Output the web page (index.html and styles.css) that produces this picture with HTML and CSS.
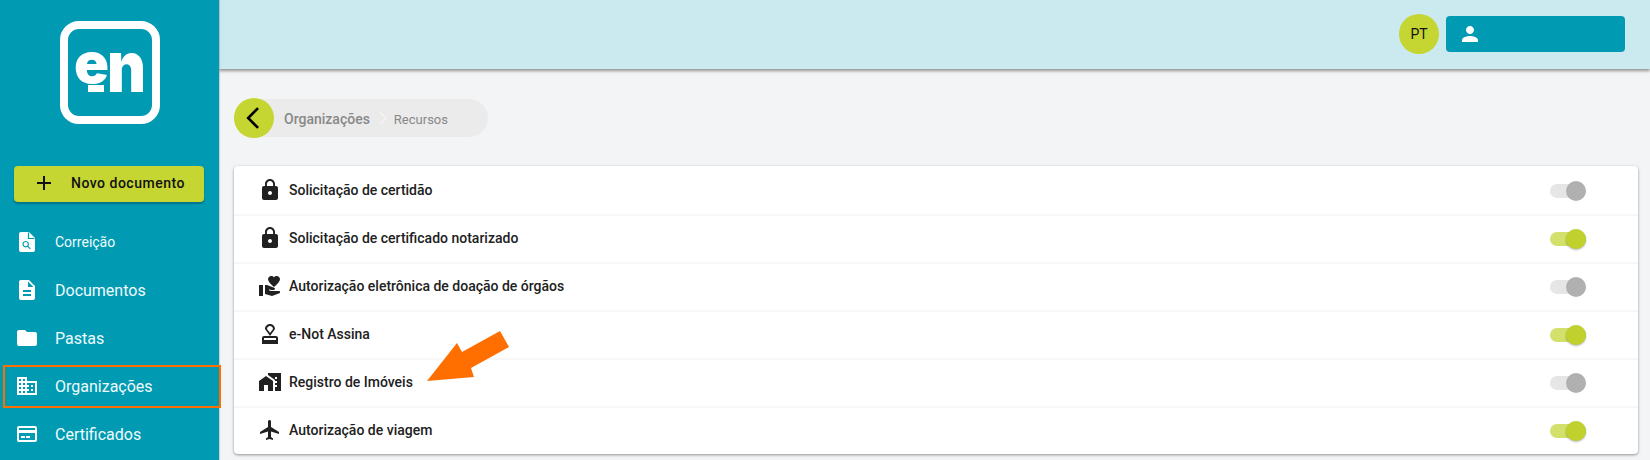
FILE: index.html
```html
<!DOCTYPE html>
<html lang="pt-BR">
<head>
<meta charset="utf-8">
<title>Recursos</title>
<link rel="stylesheet" href="styles.css">
</head>
<body>
<div class="app">
  <aside class="sidebar">
    <div class="logo">
      <svg viewBox="0 0 100 103" width="100" height="103">
        <rect x="4" y="4" width="92" height="95" rx="15" fill="none" stroke="#fff" stroke-width="8"/>
        <text class="logo-e" x="14" y="62" textLength="35" lengthAdjust="spacingAndGlyphs">e</text>
        <rect x="28" y="64" width="16" height="7" fill="#fff"/>
        <text class="logo-n" x="47" y="71" textLength="39" lengthAdjust="spacingAndGlyphs">n</text>
      </svg>
    </div>
    <button class="new-doc">
      <svg class="plus" viewBox="0 0 24 24" width="24" height="24"><path d="M19 13h-6v6h-2v-6H5v-2h6V5h2v6h6v2z"/></svg>
      <span>Novo documento</span>
    </button>
    <nav class="nav">
      <a class="nav-item small">
        <svg viewBox="0 0 24 24" width="24" height="24"><path d="M14 2H6c-1.1 0-2 .9-2 2v16c0 1.1.9 2 2 2h12c1.1 0 2-.9 2-2V8l-6-6z"/><path class="inner" d="M13.5 2.5V8.500H19.500M10.700 11.500a2.700 2.700 0 1 0 .01 0zM12.700 16.200l2.600 2.600"/></svg>
        <span>Correição</span>
      </a>
      <a class="nav-item">
        <svg viewBox="0 0 24 24" width="24" height="24"><path d="M14 2H6c-1.1 0-1.99.9-1.99 2L4 20c0 1.1.89 2 1.99 2H18c1.1 0 2-.9 2-2V8l-6-6zm2 16H8v-2h8v2zm0-4H8v-2h8v2zm-3-5V3.500L18.500 9H13z"/></svg>
        <span>Documentos</span>
      </a>
      <a class="nav-item">
        <svg viewBox="0 0 24 24" width="24" height="24"><path d="M10 4H4c-1.1 0-1.99.9-1.99 2L2 18c0 1.1.9 2 2 2h16c1.1 0 2-.9 2-2V8c0-1.1-.9-2-2-2h-8l-2-2z"/></svg>
        <span>Pastas</span>
      </a>
      <a class="nav-item current">
        <svg viewBox="0 0 24 24" width="24" height="24"><path d="M12 7V3H2v18h20V7H10zM6 19H4v-2h2v2zm0-4H4v-2h2v2zm0-4H4V9h2v2zm0-4H4V5h2v2zm4 12H8v-2h2v2zm0-4H8v-2h2v2zm0-4H8V9h2v2zm0-4H8V5h2v2zm10 12h-8v-2h2v-2h-2v-2h2v-2h-2V9h8v10zm-2-8h-2v2h2v-2zm0 4h-2v2h2v-2z"/></svg>
        <span>Organizações</span>
      </a>
      <a class="nav-item">
        <svg viewBox="0 0 24 24" width="24" height="24"><path fill-rule="evenodd" d="M20 4H4c-1.11 0-1.99.89-1.99 2L2 18c0 1.11.89 2 2 2h16c1.11 0 2-.89 2-2V6c0-1.11-.89-2-2-2zm0 14H4v-7h16v7zm0-10H4V6h16v2zM6 14h4v2H6zm5 0h4v2h-4z"/></svg>
        <span>Certificados</span>
      </a>
    </nav>
  </aside>
  <div class="main">
    <header class="topbar">
      <div class="avatar">PT</div>
      <button class="user">
        <svg viewBox="0 0 24 24" width="24" height="24"><path d="M12 12c2.21 0 4-1.79 4-4s-1.79-4-4-4-4 1.79-4 4 1.79 4 4 4zm0 2c-2.67 0-8 1.34-8 4v2h16v-2c0-2.66-5.33-4-8-4z"/></svg>
      </button>
    </header>
    <section class="content">
      <div class="crumbs">
        <button class="back">
          <svg viewBox="0 0 24 24" width="28" height="28"><path d="M15.500 3.500 7 12l8.500 8.500" fill="none" stroke="#000" stroke-width="2.2"/></svg>
        </button>
        <span class="crumb strong">Organizações</span>
        <svg class="sep" viewBox="0 0 10 16" width="10" height="16"><path d="M2 2l6 6-6 6" fill="none" stroke="#f5f5f5" stroke-width="1.500"/></svg>
        <span class="crumb">Recursos</span>
      </div>
      <ul class="list">
        <li class="row">
          <svg viewBox="0 0 24 24" width="24" height="24"><path d="M18 8h-1V6c0-2.76-2.24-5-5-5S7 3.24 7 6v2H6c-1.1 0-2 .9-2 2v10c0 1.1.9 2 2 2h12c1.1 0 2-.9 2-2V10c0-1.1-.9-2-2-2zm-6 9c-1.1 0-2-.9-2-2s.9-2 2-2 2 .9 2 2-.9 2-2 2zm3.100-9H8.900V6c0-1.71 1.39-3.100 3.100-3.100 1.71 0 3.100 1.39 3.100 3.100v2z"/></svg>
          <span class="label">Solicitação de certidão</span>
          <span class="toggle"></span>
        </li>
        <li class="row">
          <svg viewBox="0 0 24 24" width="24" height="24"><path d="M18 8h-1V6c0-2.76-2.24-5-5-5S7 3.24 7 6v2H6c-1.1 0-2 .9-2 2v10c0 1.1.9 2 2 2h12c1.1 0 2-.9 2-2V10c0-1.1-.9-2-2-2zm-6 9c-1.1 0-2-.9-2-2s.9-2 2-2 2 .9 2 2-.9 2-2 2zm3.100-9H8.900V6c0-1.71 1.39-3.100 3.100-3.100 1.71 0 3.100 1.39 3.100 3.100v2z"/></svg>
          <span class="label">Solicitação de certificado notarizado</span>
          <span class="toggle on"></span>
        </li>
        <li class="row">
          <svg viewBox="0 0 24 24" width="24" height="24"><path d="M1 11h4v11H1zm15-7.750C16.650 2.490 17.660 2 18.700 2 20.550 2 22 3.450 22 5.300c0 2.270-2.910 4.900-6 7.700-3.090-2.810-6-5.440-6-7.700C10 3.450 11.450 2 13.300 2c1.040 0 2.050.49 2.700 1.250zM20 17h-7l-2.090-.73.33-.94L13 16h2.820c.65 0 1.180-.53 1.180-1.180 0-.49-.31-.93-.77-1.110L8.970 11H7v9.020L14 22l8-3v-1c0-.55-.45-1-1-1z"/></svg>
          <span class="label">Autorização eletrônica de doação de órgãos</span>
          <span class="toggle"></span>
        </li>
        <li class="row">
          <svg viewBox="0 0 24 24" width="24" height="24"><path d="M4 16v6h16v-6c0-1.1-.9-2-2-2H6c-1.1 0-2 .9-2 2zm14 2H6v-2h12v2zM12 2C9.240 2 7 4.240 7 7l5 7 5-7c0-2.760-2.240-5-5-5zm0 9L9 7c0-1.660 1.340-3 3-3s3 1.340 3 3l-3 4z"/></svg>
          <span class="label">e-Not Assina</span>
          <span class="toggle on"></span>
        </li>
        <li class="row">
          <svg viewBox="0 0 24 24" width="24" height="24"><path d="M1 11v10h5v-6h4v6h5V11L8 6zM10 3v1.970l7 5V11h2v2h-2v2h2v2h-2v4h6V3H10zm9 6h-2V7h2v2z"/></svg>
          <span class="label">Registro de Imóveis</span>
          <span class="toggle"></span>
        </li>
        <li class="row">
          <svg viewBox="0 0 24 24" width="24" height="24"><path d="M21 16v-2l-8-5V3.500c0-.83-.67-1.500-1.500-1.500S10 2.670 10 3.500V9l-8 5v2l8-2.500V19l-2 1.500V22l3.500-1 3.500 1v-1.500L13 19v-5.500l8 2.500z"/></svg>
          <span class="label">Autorização de viagem</span>
          <span class="toggle on"></span>
        </li>
      </ul>
    </section>
  </div>
  <svg class="arrow" viewBox="0 0 100 60" width="100" height="60"><path d="M90 1 99 17 61 38 64 47 17 51 47 13 52 22z"/></svg>
</div>
</body>
</html>
```
FILE: styles.css
```css
*, *::before, *::after { box-sizing: border-box; }
html, body { margin: 0; padding: 0; height: 460px; overflow: hidden; }
body { font-family: Roboto, "Liberation Sans", sans-serif; background: #f3f4f6; color: #212121; }
button { font-family: inherit; border: 0; padding: 0; cursor: pointer; }

.app { position: relative; display: flex; width: 1650px; height: 460px; overflow: hidden; }

.sidebar { width: 219px; flex: none; background: #009ab3; display: flex; flex-direction: column; align-items: stretch; padding-top: 21px; box-shadow: 1px 0 1px rgba(0,0,0,.15); z-index: 2; }
.logo { display: flex; justify-content: center; height: 103px; margin-bottom: 42px; }
.logo svg { display: block; }
.logo-e, .logo-n { font-family: Inter, Roboto, sans-serif; font-weight: 900; fill: #fff; }
.logo-e { font-size: 56px; }
.logo-n { font-size: 71px; }

.new-doc { display: flex; align-items: center; width: 190px; height: 36px; margin-left: 14px; background: #c5d531; border-radius: 4px; box-shadow: 0 2px 2px rgba(0,0,0,.25); padding: 0 0 2px 18px; color: #111; font-size: 14px; font-weight: 500; letter-spacing: .5px; flex: none; }
.plus { fill: #111; margin-right: 15px; }

.nav { display: flex; flex-direction: column; margin-top: 16px; }
.nav-item { position: relative; display: flex; align-items: center; height: 48px; padding-left: 15px; color: #f0fbfc; font-size: 16px; }
.nav-item svg { fill: #fff; margin-right: 16px; flex: none; }
.nav-item .inner { fill: none; stroke: #009ab3; stroke-width: 1.2; }
.nav-item.small { font-size: 14px; }
.nav-item.current::after { content: ""; position: absolute; left: 3px; top: 3px; width: 218px; height: 43px; border: 2px solid #ff6f00; z-index: 3; }

.main { flex: 1; display: flex; flex-direction: column; min-width: 0; }
.topbar { height: 69px; flex: none; background: #cbeaef; box-shadow: 0 2px 3px rgba(0,0,0,.4); display: flex; align-items: center; justify-content: flex-end; padding-right: 25px; padding-bottom: 1px; z-index: 1; }
.avatar { width: 40px; height: 40px; border-radius: 50%; background: #c5d531; color: #111; font-size: 14px; display: flex; align-items: center; justify-content: center; margin-right: 7px; }
.user { width: 179px; height: 36px; background: #009ab3; border-radius: 4px; display: flex; align-items: center; padding-left: 12px; }
.user svg { fill: #fff; }

.content { flex: 1; padding: 30px 12px 0 15px; }
.crumbs { display: flex; align-items: center; width: 254px; height: 38px; margin-bottom: 29px; background: #ebebeb; border-radius: 19px; }
.back { width: 40px; height: 40px; flex: none; border-radius: 50%; background: #c5d531; display: flex; align-items: center; justify-content: center; margin-right: 10px; }
.crumb { font-size: 13px; color: #888; padding-top: 2px; }
.crumb.strong { font-size: 14px; font-weight: 500; }
.sep { margin: 0 6px 0 8px; }

.list { list-style: none; margin: 0; padding: 0; background: #fff; border-radius: 4px; box-shadow: 0 1px 3px rgba(0,0,0,.4); }
.row { display: flex; align-items: center; height: 48px; padding: 0 52px 0 24px; box-shadow: inset 0 2px 0 #f7f7f8; }
.row:first-child { box-shadow: none; }
.row svg { fill: #212121; flex: none; margin-right: 7px; }
.label { flex: 1; font-size: 14px; font-weight: 500; color: #212121; }

.toggle { position: relative; width: 36px; height: 14px; margin-top: 2px; border-radius: 7px; background: #e6e6e6; flex: none; }
.toggle::after { content: ""; position: absolute; right: 0; top: -3px; width: 20px; height: 20px; border-radius: 50%; background: #b0b0b0; }
.toggle.on { background: #d3e06c; }
.toggle.on::after { background: #c0d02d; box-shadow: 0 1px 2px rgba(0,0,0,.3); }

.arrow { position: absolute; left: 410px; top: 330px; z-index: 4; }
.arrow path { fill: #ff6f00; }
```
